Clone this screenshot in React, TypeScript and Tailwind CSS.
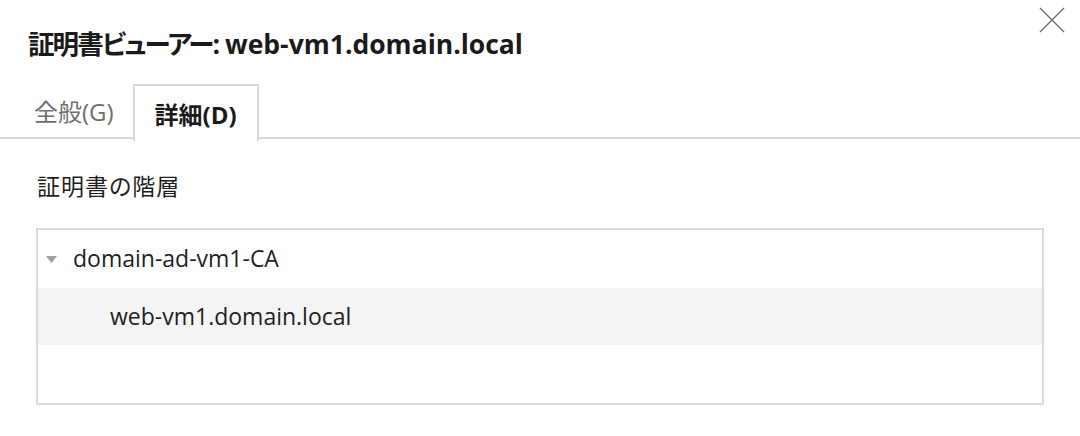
import React from 'react';

const FONT = "font-['Open_Sans','Noto_Sans_CJK_JP',sans-serif] [font-feature-settings:'palt']";

function CloseIcon() {
  return (
    <svg width="26" height="26" viewBox="0 0 26 26" fill="none">
      <path d="M1 1 L25 25 M25 1 L1 25" stroke="#6e6e6e" strokeWidth="1.4" />
    </svg>
  );
}

function Caret() {
  return (
    <svg width="11" height="7" viewBox="0 0 11 7">
      <path d="M0 0 H11 L5.5 7 Z" fill="#a0a0a0" />
    </svg>
  );
}

export default function App() {
  return (
    <div className={`relative w-[1080px] h-[436px] bg-white overflow-hidden ${FONT}`}>
      <button className="absolute top-[7px] right-[15px]">
        <CloseIcon />
      </button>

      {/* Title */}
      <h1 className="pt-[26px] pl-[28px] text-[26.5px] leading-[36px] font-bold text-[#1b1b1b]">
        <span className="tracking-[-1.9px]">証明書ビューアー:</span> web-vm1.domain.local
      </h1>

      {/* Tabs */}
      <div className="mt-[22px] flex pl-[14px] border-b-2 border-[#d9d9d9] h-[55px]">
        <div className="pl-[20px] pr-[19px] flex items-center text-[24px] text-[#6f6f6f] pt-[3px]">全般(G)</div>
        <div className="px-[20px] flex items-center text-[24px] font-bold text-[#1b1b1b] border-2 border-b-0 border-[#d9d9d9] bg-white -mb-[2px] h-[57px] pt-[3px]">
          詳細(D)
        </div>
      </div>

      {/* Hierarchy */}
      <div className="px-[36px]">
        <div className="mt-[31px] pl-[1px] text-[23px] leading-[32px] tracking-[1px] text-[#1f1f1f]">証明書の階層</div>
        <div className="mt-[26px] border-2 border-[#dcdcdc] h-[177px] w-[1008px] text-[23px] text-[#1f1f1f]">
          <div className="h-[58px] flex items-center pl-[8px] gap-[16px]">
            <Caret />
            <span className="-mt-[1px]">domain-ad-vm1-CA</span>
          </div>
          <div className="h-[57px] flex items-center pl-[72px] bg-[#f4f4f4]">
            <span>web-vm1.domain.local</span>
          </div>
        </div>
      </div>
    </div>
  );
}
